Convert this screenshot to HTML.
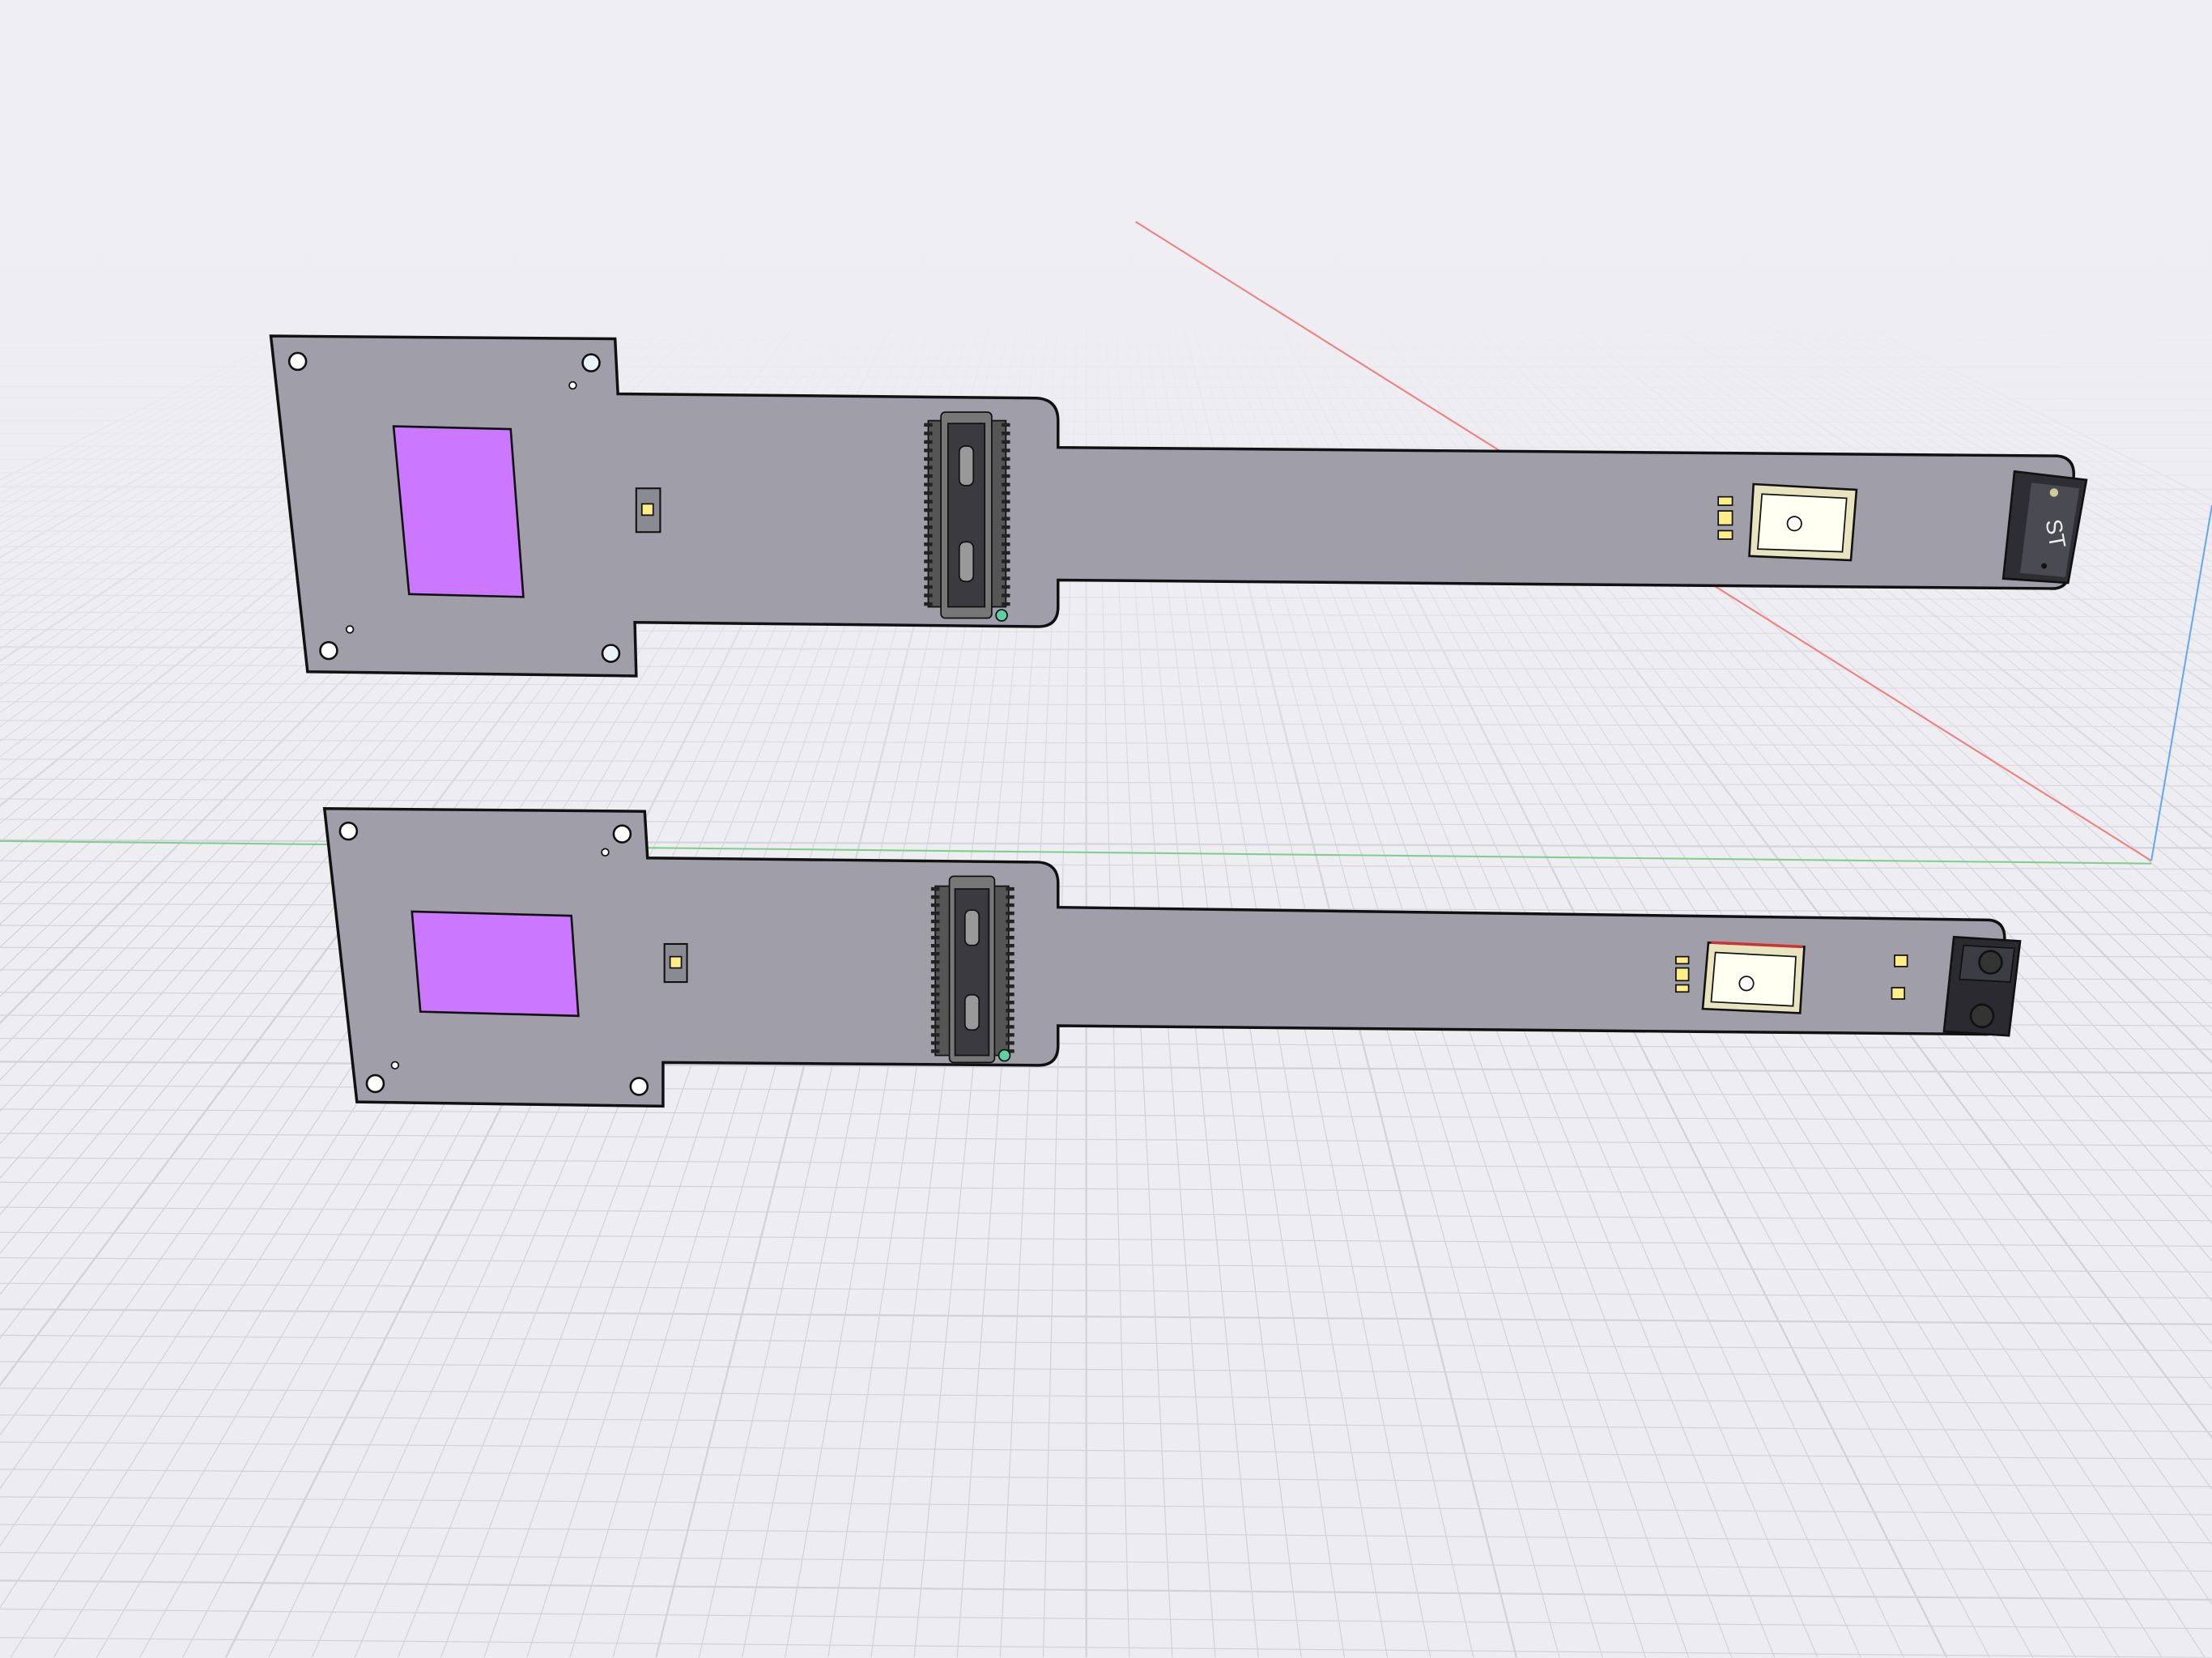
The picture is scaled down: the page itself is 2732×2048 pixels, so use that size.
<!DOCTYPE html>
<html><head><meta charset="utf-8"><style>
html,body{margin:0;padding:0;background:#efeff3;}
svg{display:block}
</style></head><body>
<svg id="s" width="2732" height="2048" viewBox="0 0 1568 1175" xmlns="http://www.w3.org/2000/svg">
<defs>
<linearGradient id="bg" x1="0" y1="0" x2="0" y2="1">
<stop offset="0" stop-color="#efeff3"/><stop offset="1" stop-color="#ececf1"/>
</linearGradient>
<linearGradient id="fade" gradientUnits="userSpaceOnUse" x1="0" y1="215" x2="0" y2="650">
<stop offset="0" stop-color="#fff" stop-opacity="0"/><stop offset="1" stop-color="#fff" stop-opacity="1"/>
</linearGradient>
<mask id="m"><rect width="1568" height="1175" fill="url(#fade)"/></mask>
</defs>
<rect width="1568" height="1175" fill="url(#bg)"/>
<g id="grid" stroke="#d2d2d9" stroke-width="0.7" fill="none" mask="url(#m)"></g>
<line x1="805" y1="157" x2="1525" y2="610" stroke="#f08080" stroke-width="1.2"/>
<line x1="0" y1="596" x2="1525" y2="612" stroke="#7fd08f" stroke-width="1.2"/>
<line x1="1525" y1="610" x2="1568" y2="358" stroke="#6aa8f0" stroke-width="1.2"/>

<path d="M192,238 L436,240 L438,279 L735,282 Q750,283 750,298 L750,317 L1458,323 Q1470,324 1470,336 L1467,405 Q1466,418 1453,417 L750,411 L750,430 Q750,444 736,444 L450,441 L451,479 L218,476 Z" fill="#a09fa9" stroke="#111" stroke-width="2"/>
<path d="M279,302 L362,304 L371,423 L290,421 Z" fill="#cc77ff" stroke="#111" stroke-width="1.5"/>
<circle cx="211" cy="256" r="6" fill="#fff" stroke="#111" stroke-width="1.5"/>
<circle cx="419" cy="257" r="6" fill="#e8f4f8" stroke="#111" stroke-width="1.5"/>
<circle cx="233" cy="461" r="6" fill="#fff" stroke="#111" stroke-width="1.5"/>
<circle cx="433" cy="463" r="6" fill="#e8f4f8" stroke="#111" stroke-width="1.5"/>
<circle cx="406" cy="273" r="2.5" fill="#fff" stroke="#111"/>
<circle cx="248" cy="446" r="2.5" fill="#fff" stroke="#111"/>
<rect x="451" y="346" width="17" height="31" fill="#8a8a92" stroke="#111" stroke-width="1.2"/>
<rect x="455" y="357" width="8" height="8" fill="#ffee88" stroke="#111"/>
<g stroke="#111" stroke-width="1">
<rect x="658" y="298" width="55" height="132" fill="#555" />
<rect x="667" y="292" width="36" height="146" rx="3" fill="#777"/>
<rect x="672" y="300" width="26" height="130" fill="#3a3a3f"/>
<rect x="680" y="316" width="10" height="28" rx="4" fill="#999"/>
<rect x="680" y="384" width="10" height="28" rx="4" fill="#999"/>
</g>
<g stroke="#222" stroke-width="2.5" id="pinsT"></g>
<circle cx="710" cy="436" r="4" fill="#5fd0a0" stroke="#111"/>
<rect x="1218" y="352" width="10" height="6" fill="#ffee88" stroke="#111"/>
<rect x="1218" y="362" width="10" height="10" fill="#ffee88" stroke="#111"/>
<rect x="1218" y="376" width="10" height="6" fill="#ffee88" stroke="#111"/>
<path d="M1243,343 L1316,347 L1312,397 L1240,394 Z" fill="#e8e4c0" stroke="#111" stroke-width="1.5"/>
<path d="M1249,350 L1309,353 L1306,391 L1246,389 Z" fill="#fffff2" stroke="#111"/>
<circle cx="1272" cy="371" r="5" fill="#fff" stroke="#111"/>
<path d="M1428,334 L1479,340 L1466,413 L1420,410 Z" fill="#2d2d33" stroke="#111" stroke-width="1.5"/>
<path d="M1440,342 L1474,346 L1464,409 L1432,406 Z" fill="#4a4a52"/>
<text x="0" y="0" transform="translate(1450,369) rotate(80)" font-family="Liberation Sans, sans-serif" font-size="16" fill="#eee">ST</text>
<circle cx="1456" cy="349" r="3" fill="#cc9" />
<circle cx="1449" cy="401" r="2" fill="#111"/>

<path d="M230,573 L457,575 L459,608 L736,611 Q750,612 750,626 L750,643 L1410,652 Q1421,653 1421,665 L1419,722 Q1418,734 1406,733 L750,727 L750,741 Q750,755 736,755 L470,753 L470,784 L253,781 Z" fill="#a09fa9" stroke="#111" stroke-width="2"/>
<path d="M292,646 L405,649 L410,720 L298,717 Z" fill="#cc77ff" stroke="#111" stroke-width="1.5"/>
<circle cx="247" cy="589" r="6" fill="#fff" stroke="#111" stroke-width="1.5"/>
<circle cx="441" cy="591" r="6" fill="#fff" stroke="#111" stroke-width="1.5"/>
<circle cx="266" cy="768" r="6" fill="#fff" stroke="#111" stroke-width="1.5"/>
<circle cx="453" cy="770" r="6" fill="#fff" stroke="#111" stroke-width="1.5"/>
<circle cx="429" cy="604" r="2.5" fill="#fff" stroke="#111"/>
<circle cx="280" cy="755" r="2.5" fill="#fff" stroke="#111"/>
<rect x="471" y="669" width="16" height="27" fill="#8a8a92" stroke="#111" stroke-width="1.2"/>
<rect x="475" y="678" width="8" height="8" fill="#ffee88" stroke="#111"/>
<g stroke="#111" stroke-width="1">
<rect x="663" y="628" width="52" height="120" fill="#555"/>
<rect x="673" y="621" width="32" height="132" rx="3" fill="#777"/>
<rect x="677" y="630" width="24" height="118" fill="#3a3a3f"/>
<rect x="684" y="645" width="10" height="25" rx="4" fill="#999"/>
<rect x="684" y="705" width="10" height="25" rx="4" fill="#999"/>
</g>
<g stroke="#222" stroke-width="2.5" id="pinsB"></g>
<circle cx="712" cy="748" r="4" fill="#5fd0a0" stroke="#111"/>
<rect x="1188" y="678" width="9" height="5" fill="#ffee88" stroke="#111"/>
<rect x="1188" y="686" width="9" height="9" fill="#ffee88" stroke="#111"/>
<rect x="1188" y="698" width="9" height="5" fill="#ffee88" stroke="#111"/>
<path d="M1211,668 L1279,671 L1276,718 L1207,715 Z" fill="#e8e4c0" stroke="#111" stroke-width="1.5"/>
<path d="M1216,675 L1273,678 L1271,713 L1213,710 Z" fill="#fffff2" stroke="#111"/>
<path d="M1213,668 L1278,671" stroke="#c33" stroke-width="2"/>
<circle cx="1238" cy="697" r="5" fill="#fff" stroke="#111"/>
<rect x="1343" y="677" width="9" height="8" fill="#ffee88" stroke="#111"/>
<rect x="1341" y="700" width="9" height="8" fill="#ffee88" stroke="#111"/>
<path d="M1385,664 L1432,667 L1424,734 L1378,731 Z" fill="#2a2a30" stroke="#111" stroke-width="1.5"/>
<path d="M1392,670 L1428,672 L1425,696 L1389,694 Z" fill="#3c3c44" stroke="#111"/>
<circle cx="1411" cy="682" r="8" fill="#333" stroke="#111" stroke-width="1.5"/>
<circle cx="1405" cy="720" r="8" fill="#333" stroke="#111" stroke-width="1.5"/>
</svg>
<script>
var NS="http://www.w3.org/2000/svg";
function L(g,x1,y1,x2,y2,w){var l=document.createElementNS(NS,"line");l.setAttribute("x1",x1);l.setAttribute("y1",y1);l.setAttribute("x2",x2);l.setAttribute("y2",y2);if(w)l.setAttribute("stroke-width",w);g.appendChild(l);}
var g=document.getElementById("grid");
var h=215;
for(var i=3;i<120;i++){var y=h+Math.pow(i,1.55)*1.25;if(y>1175)break;L(g,0,y,1568,y+(y-h)*0.015,(i%10==0)?1.3:0.7);}
for(var k=-80;k<=80;k++){var xt=770+k*6.5,xb=770+k*30.5;L(g,xt,h,xb,1175,(k%10==0)?1.3:0.7);}
function pins(id,x1,x2,y0,y1,n){var g=document.getElementById(id);for(var i=0;i<n;i++){var y=y0+(y1-y0)*i/(n-1);L(g,x1-6,y,x1,y);L(g,x2,y,x2+6,y);}}
pins("pinsT",661,710,301,428,22);
pins("pinsB",666,713,630,745,21);
</script>
</body></html>
